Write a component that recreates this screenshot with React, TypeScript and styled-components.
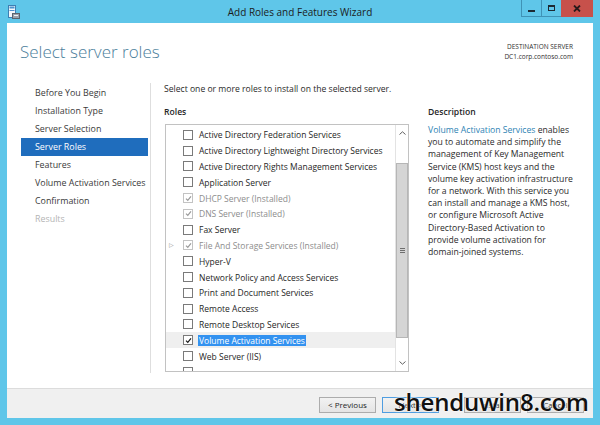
import React from "react";
import styled, { createGlobalStyle } from "styled-components";

const GlobalStyle = createGlobalStyle`
  html, body {
    margin: 0;
    padding: 0;
  }
  body {
    width: 600px;
    height: 425px;
    overflow: hidden;
    font-family: "Open Sans", "Noto Sans", sans-serif;
    color: #1e1e1e;
  }
`;

const steps = [
  "Before You Begin",
  "Installation Type",
  "Server Selection",
  "Server Roles",
  "Features",
  "Volume Activation Services",
  "Confirmation",
  "Results",
];

// last entry is only scrolled into view by its checkbox edge
const roles = [
  { name: "Active Directory Federation Services" },
  { name: "Active Directory Lightweight Directory Services" },
  { name: "Active Directory Rights Management Services" },
  { name: "Application Server" },
  { name: "DHCP Server (Installed)", installed: true },
  { name: "DNS Server (Installed)", installed: true },
  { name: "Fax Server" },
  { name: "File And Storage Services (Installed)", installed: true, expandable: true },
  { name: "Hyper-V" },
  { name: "Network Policy and Access Services" },
  { name: "Print and Document Services" },
  { name: "Remote Access" },
  { name: "Remote Desktop Services" },
  { name: "Volume Activation Services", checked: true, selected: true },
  { name: "Web Server (IIS)" },
  { name: "" },
];

const description = [
  "you to automate and simplify the",
  "management of Key Management",
  "Service (KMS) host keys and the",
  "volume key activation infrastructure",
  "for a network. With this service you",
  "can install and manage a KMS host,",
  "or configure Microsoft Active",
  "Directory-Based Activation to",
  "provide volume activation for",
  "domain-joined systems.",
];

const CheckMark = ({ color }: { color: string }) => (
  <svg width="7" height="7" viewBox="0 0 7 7">
    <path d="M1 3.6 L2.8 5.4 L6 1.4" fill="none" stroke={color} strokeWidth="1.2" />
  </svg>
);

const AppIcon = () => (
  <svg width="12" height="14" viewBox="0 0 12 14">
    <rect x="0.5" y="0.5" width="7" height="12" fill="#f4f8fb" stroke="#3d7fb3" />
    <rect x="1.5" y="1.5" width="5" height="2" fill="#4b93cf" />
    <rect x="1.5" y="5" width="5" height="1" fill="#4b93cf" />
    <rect x="4.5" y="8.5" width="7" height="5" fill="#9aa4ad" stroke="#5b646c" />
    <rect x="6" y="10" width="4" height="1" fill="#eef1f3" />
  </svg>
);

export default function App() {
  return (
    <>
      <GlobalStyle />
      <Window>
        <TitleBar>
          <TitleIcon>
            <AppIcon />
          </TitleIcon>
          <TitleText>Add Roles and Features Wizard</TitleText>
          <Controls>
            <CtrlButton>
              <MinGlyph />
            </CtrlButton>
            <CtrlButton>
              <MaxGlyph />
            </CtrlButton>
            <CloseButton>
              <svg width="8" height="7" viewBox="0 0 8 7">
                <path d="M1 0.5 L7 6.5 M7 0.5 L1 6.5" stroke="#2a1a1a" strokeWidth="1.8" />
              </svg>
            </CloseButton>
          </Controls>
        </TitleBar>

        <Client>
          <Header>
            <Heading>Select server roles</Heading>
            <Destination>
              <span>DESTINATION SERVER</span>
              <span>DC1.corp.contoso.com</span>
            </Destination>
          </Header>

          <Body>
            <Nav>
              {steps.map((s, i) => (
                <NavItem key={s} $active={i === 3} $disabled={i === 7}>
                  {s}
                </NavItem>
              ))}
            </Nav>

            <Content>
              <Instruction>Select one or more roles to install on the selected server.</Instruction>
              <Columns>
                <RolesPane>
                  <SectionLabel>Roles</SectionLabel>
                  <ListBox>
                    <RoleRows>
                      {roles.map((r, i) => (
                        <RoleRow key={i} $selected={!!r.selected}>
                          <Expander>{r.expandable ? "▷" : ""}</Expander>
                          <Checkbox $disabled={!!r.installed}>
                            {(r.installed || r.checked) && (
                              <CheckMark color={r.installed ? "#9a9a9a" : "#1a1a1a"} />
                            )}
                          </Checkbox>
                          {r.name && (
                            <RoleName $disabled={!!r.installed} $selected={!!r.selected}>
                              {r.name}
                            </RoleName>
                          )}
                        </RoleRow>
                      ))}
                    </RoleRows>
                    <ScrollBar>
                      <ScrollArrow>
                        <svg width="7" height="4" viewBox="0 0 7 4">
                          <path d="M0.5 3.5 L3.5 0.8 L6.5 3.5" fill="none" stroke="#606060" />
                        </svg>
                      </ScrollArrow>
                      <Track>
                        <Thumb>
                          <Grip />
                        </Thumb>
                      </Track>
                      <ScrollArrow>
                        <svg width="7" height="4" viewBox="0 0 7 4">
                          <path d="M0.5 0.5 L3.5 3.2 L6.5 0.5" fill="none" stroke="#606060" />
                        </svg>
                      </ScrollArrow>
                    </ScrollBar>
                  </ListBox>
                </RolesPane>

                <DescPane>
                  <SectionLabel>Description</SectionLabel>
                  <DescText>
                    <DescLine>
                      <Link>Volume Activation Services</Link> enables
                    </DescLine>
                    {description.map((l) => (
                      <DescLine key={l}>{l}</DescLine>
                    ))}
                  </DescText>
                </DescPane>
              </Columns>
            </Content>
          </Body>

          <Footer>
            <Button>&lt; Previous</Button>
            <Button $default>Next &gt;</Button>
            <Button $gap>Install</Button>
            <Button>Cancel</Button>
          </Footer>
        </Client>

        <Watermark>shenduwin8.com</Watermark>
      </Window>
    </>
  );
}

const Window = styled.div`
  position: relative;
  width: 600px;
  height: 425px;
  box-sizing: border-box;
  padding: 0 7px 7px;
  background: #5fc6e9;
  display: flex;
  flex-direction: column;
`;

const TitleBar = styled.div`
  height: 23px;
  display: grid;
  grid-template-columns: 1fr auto 1fr;
  align-items: start;
`;

const TitleIcon = styled.div`
  padding: 5px 0 0 1px;
  display: flex;
`;

const TitleText = styled.div`
  font-size: 10px;
  line-height: 12px;
  margin-top: 6px;
  color: #1c1c1c;
`;

const Controls = styled.div`
  justify-self: end;
  display: flex;
  height: 17px;
`;

const CtrlButton = styled.div`
  width: 20px;
  height: 17px;
  border: 1px solid #3f93b6;
  border-top: none;
  border-right: none;
  box-sizing: border-box;
  display: flex;
  align-items: center;
  justify-content: center;
`;

const CloseButton = styled.div`
  width: 32px;
  height: 17px;
  background: #c7514b;
  display: flex;
  align-items: center;
  justify-content: center;
`;

const MinGlyph = styled.div`
  width: 7px;
  height: 2px;
  margin-top: 5px;
  background: #1d2a33;
`;

const MaxGlyph = styled.div`
  width: 7px;
  height: 6px;
  box-sizing: border-box;
  border: 1.5px solid #1d2a33;
  border-top-width: 2px;
`;

const Client = styled.div`
  flex: 1;
  background: #ffffff;
  display: flex;
  flex-direction: column;
`;

const Header = styled.div`
  height: 60px;
  box-sizing: border-box;
  padding: 18px 20px 0 13px;
  display: flex;
  justify-content: space-between;
  align-items: flex-start;
`;

const Heading = styled.h1`
  margin: 0;
  font-size: 17px;
  line-height: 22px;
  font-weight: 300;
  color: #4b7e9b;
`;

const Destination = styled.div`
  margin-top: 1px;
  display: flex;
  flex-direction: column;
  align-items: flex-end;
  font-size: 6.5px;
  line-height: 10px;
  color: #303030;
`;

const Body = styled.div`
  flex: 1;
  display: flex;
  padding-bottom: 15px;
`;

const Nav = styled.div`
  width: 144px;
  box-sizing: border-box;
  padding: 1px 2px 0 14px;
  border-right: 1px solid #dedede;
  display: flex;
  flex-direction: column;
`;

const NavItem = styled.div<{ $active?: boolean; $disabled?: boolean }>`
  height: 18px;
  line-height: 18px;
  padding-left: 14px;
  font-size: 8.9px;
  white-space: nowrap;
  color: ${(p) => (p.$active ? "#ffffff" : p.$disabled ? "#b4b4b4" : "#3a3a3a")};
  background: ${(p) => (p.$active ? "#1f6dbd" : "transparent")};
`;

const Content = styled.div`
  flex: 1;
  padding-left: 13px;
  display: flex;
  flex-direction: column;
`;

const Instruction = styled.div`
  font-size: 8.6px;
  line-height: 12px;
  color: #2a2a2a;
  white-space: nowrap;
`;

const Columns = styled.div`
  margin-top: 11px;
  display: flex;
  gap: 19px;
`;

const RolesPane = styled.div`
  width: 245px;
  display: flex;
  flex-direction: column;
`;

const SectionLabel = styled.div`
  font-size: 8.6px;
  line-height: 12px;
  font-weight: 600;
  color: #262626;
`;

const ListBox = styled.div`
  margin-top: 6px;
  margin-left: 1px;
  height: 248px;
  box-sizing: border-box;
  border: 1px solid #c2c2c2;
  display: flex;
  overflow: hidden;
`;

const RoleRows = styled.div`
  flex: 1;
  padding-top: 2px;
  display: flex;
  flex-direction: column;
  overflow: hidden;
`;

const RoleRow = styled.div<{ $selected: boolean }>`
  flex: 0 0 15.8px;
  display: flex;
  align-items: center;
  background: ${(p) => (p.$selected ? "#efefef" : "transparent")};
`;

const Expander = styled.span`
  width: 17px;
  padding-left: 3px;
  box-sizing: border-box;
  font-size: 6px;
  color: #8a8a8a;
`;

const Checkbox = styled.span<{ $disabled: boolean }>`
  width: 10px;
  height: 10px;
  box-sizing: border-box;
  border: 1px solid ${(p) => (p.$disabled ? "#c3c3c3" : "#7a7a7a")};
  background: #ffffff;
  display: flex;
  align-items: center;
  justify-content: center;
`;

const RoleName = styled.span<{ $disabled: boolean; $selected: boolean }>`
  margin-left: 5px;
  padding: 0 1px;
  font-size: 8.5px;
  line-height: 11px;
  white-space: nowrap;
  color: ${(p) => (p.$selected ? "#ffffff" : p.$disabled ? "#8d8d8d" : "#262626")};
  background: ${(p) => (p.$selected ? "#3392f0" : "transparent")};
`;

const ScrollBar = styled.div`
  width: 12px;
  border-left: 1px solid #e3e3e3;
  display: flex;
  flex-direction: column;
`;

const ScrollArrow = styled.div`
  height: 16px;
  display: flex;
  align-items: center;
  justify-content: center;
`;

const Track = styled.div`
  flex: 1;
  padding: 22px 0 17px;
  display: flex;
`;

const Thumb = styled.div`
  flex: 1;
  background: #d5d5d5;
  border: 1px solid #b6b6b6;
  display: flex;
  align-items: center;
  justify-content: center;
`;

const Grip = styled.div`
  width: 5px;
  height: 5px;
  background: repeating-linear-gradient(#6e6e6e 0 1px, transparent 1px 2px);
`;

const DescPane = styled.div`
  flex: 1;
  display: flex;
  flex-direction: column;
`;

const DescText = styled.div`
  margin-top: 6px;
  font-size: 8.65px;
  line-height: 12.2px;
  color: #2a2a2a;
`;

const DescLine = styled.div`
  white-space: nowrap;
`;

const Link = styled.span`
  color: #2d83b4;
`;

const Footer = styled.div`
  height: 30px;
  box-sizing: border-box;
  border-top: 1px solid #dcdcdc;
  background: #f0f0f0;
  padding: 8px 9px 0 0;
  display: flex;
  justify-content: flex-end;
  align-items: flex-start;
  gap: 6px;
`;

const Button = styled.div<{ $default?: boolean; $gap?: boolean }>`
  width: 57px;
  height: 16px;
  box-sizing: border-box;
  margin-left: ${(p) => (p.$gap ? "19px" : "0")};
  border: 1px solid ${(p) => (p.$default ? "#4f9de0" : "#acacac")};
  background: linear-gradient(#f2f2f2, #e4e4e4);
  font-size: 8px;
  line-height: 14px;
  text-align: center;
  color: #1e1e1e;
`;

const Watermark = styled.div`
  position: absolute;
  left: 394px;
  top: 386px;
  font-family: "Open Sans", "DejaVu Sans", sans-serif;
  font-size: 24px;
  font-weight: 600;
  line-height: 32px;
  letter-spacing: -0.2px;
  color: #111111;
  text-shadow: 0 0 2px #ffffff, 0 0 2px #ffffff;
`;
